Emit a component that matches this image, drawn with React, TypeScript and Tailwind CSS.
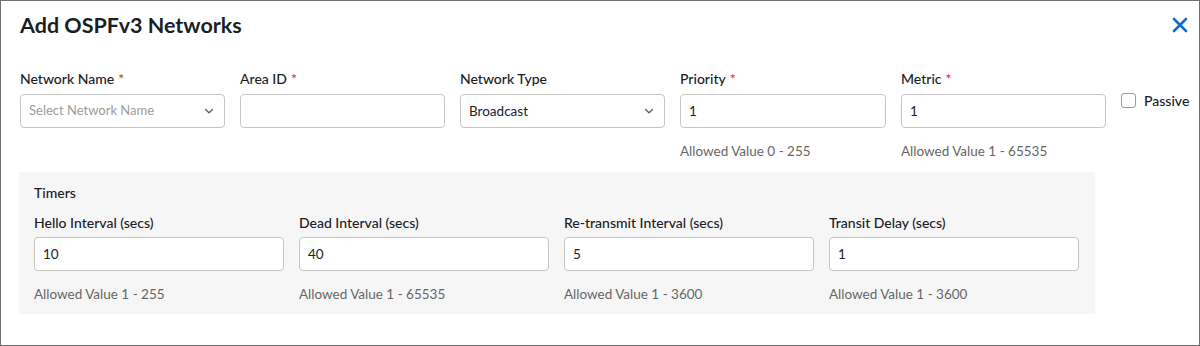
import React from 'react';

interface FieldProps {
  label: string;
  required?: boolean;
  value?: string;
  placeholder?: string;
  select?: boolean;
  hint?: string;
  width: string;
  gapClass?: string;
}

const Chevron = () => (
  <svg className="w-[10px] h-[10px] text-[#5a5a5a]" viewBox="0 0 10 10" fill="none" stroke="currentColor">
    <path d="M1.5 3.5 L5 6.8 L8.5 3.5" strokeWidth="1.2" strokeLinecap="round" strokeLinejoin="round" />
  </svg>
);

const Field: React.FC<FieldProps> = ({ label, required, value, placeholder, select, hint, width, gapClass = 'mb-[6px]' }) => (
  <div className={`${width} shrink-0`}>
    <div className={`h-[18px] leading-[18px] text-[14px] font-medium text-[#1c2128] ${gapClass}`}>
      {label}
      {required && <span className="text-[#e3262f] ml-[4px]">*</span>}
    </div>
    <div className="h-[34px] rounded-[4px] border border-[#c6c6c6] bg-white flex items-center justify-between pl-[8px] pr-[10px]">
      {value ? (
        <span className="text-[13.5px] text-[#1c2128]">{value}</span>
      ) : (
        <span className="text-[13px] text-[#9c9c9c]">{placeholder}</span>
      )}
      {select && <Chevron />}
    </div>
    <div className="mt-[14px] h-[18px] leading-[18px] text-[13.5px] text-[#676767]">{hint}</div>
  </div>
);

const App: React.FC = () => {
  return (
    <div className="w-[1200px] h-[346px] border border-[#707070] bg-white font-['Lato','Noto_Sans',sans-serif]">
      <div className="flex items-center justify-between pl-[19px] pr-[11px] pt-[10px]">
        <h1 className="text-[21.5px] leading-[28px] font-bold text-[#1a1f26]">Add OSPFv3 Networks</h1>
        <svg className="w-[16px] h-[16px] text-[#0d6fd0]" viewBox="0 0 16 16" fill="none" stroke="currentColor">
          <path d="M2 2 L14 14 M14 2 L2 14" strokeWidth="2.6" strokeLinecap="round" />
        </svg>
      </div>

      <div className="flex gap-[15px] pl-[19px] mt-[31px]">
        <Field width="w-[205px]" label="Network Name" required placeholder="Select Network Name" select />
        <Field width="w-[205px]" label="Area ID" required />
        <Field width="w-[205px]" label="Network Type" value="Broadcast" select />
        <Field width="w-[206px]" label="Priority" required value="1" hint="Allowed Value 0 - 255" />
        <Field width="w-[205px]" label="Metric" required value="1" hint="Allowed Value 1 - 65535" />
        <div className="flex items-center gap-[8px] mt-[23px] h-[15px]">
          <div className="w-[15px] h-[15px] rounded-[3px] border border-[#9b9b9b] bg-white" />
          <span className="text-[14px] font-medium text-[#1c2128]">Passive</span>
        </div>
      </div>

      <div className="ml-[18px] mt-[12px] w-[1076px] bg-[#f6f6f6] pl-[15px] pt-[12px] pb-[11px]">
        <div className="h-[18px] leading-[18px] text-[14px] font-medium text-[#1c2128] mb-[12px]">Timers</div>
        <div className="flex gap-[15px]">
          <Field width="w-[250px]" gapClass="mb-[5px]" label="Hello Interval (secs)" value="10" hint="Allowed Value 1 - 255" />
          <Field width="w-[250px]" gapClass="mb-[5px]" label="Dead Interval (secs)" value="40" hint="Allowed Value 1 - 65535" />
          <Field width="w-[250px]" gapClass="mb-[5px]" label="Re-transmit Interval (secs)" value="5" hint="Allowed Value 1 - 3600" />
          <Field width="w-[250px]" gapClass="mb-[5px]" label="Transit Delay (secs)" value="1" hint="Allowed Value 1 - 3600" />
        </div>
      </div>
    </div>
  );
};

export default App;
